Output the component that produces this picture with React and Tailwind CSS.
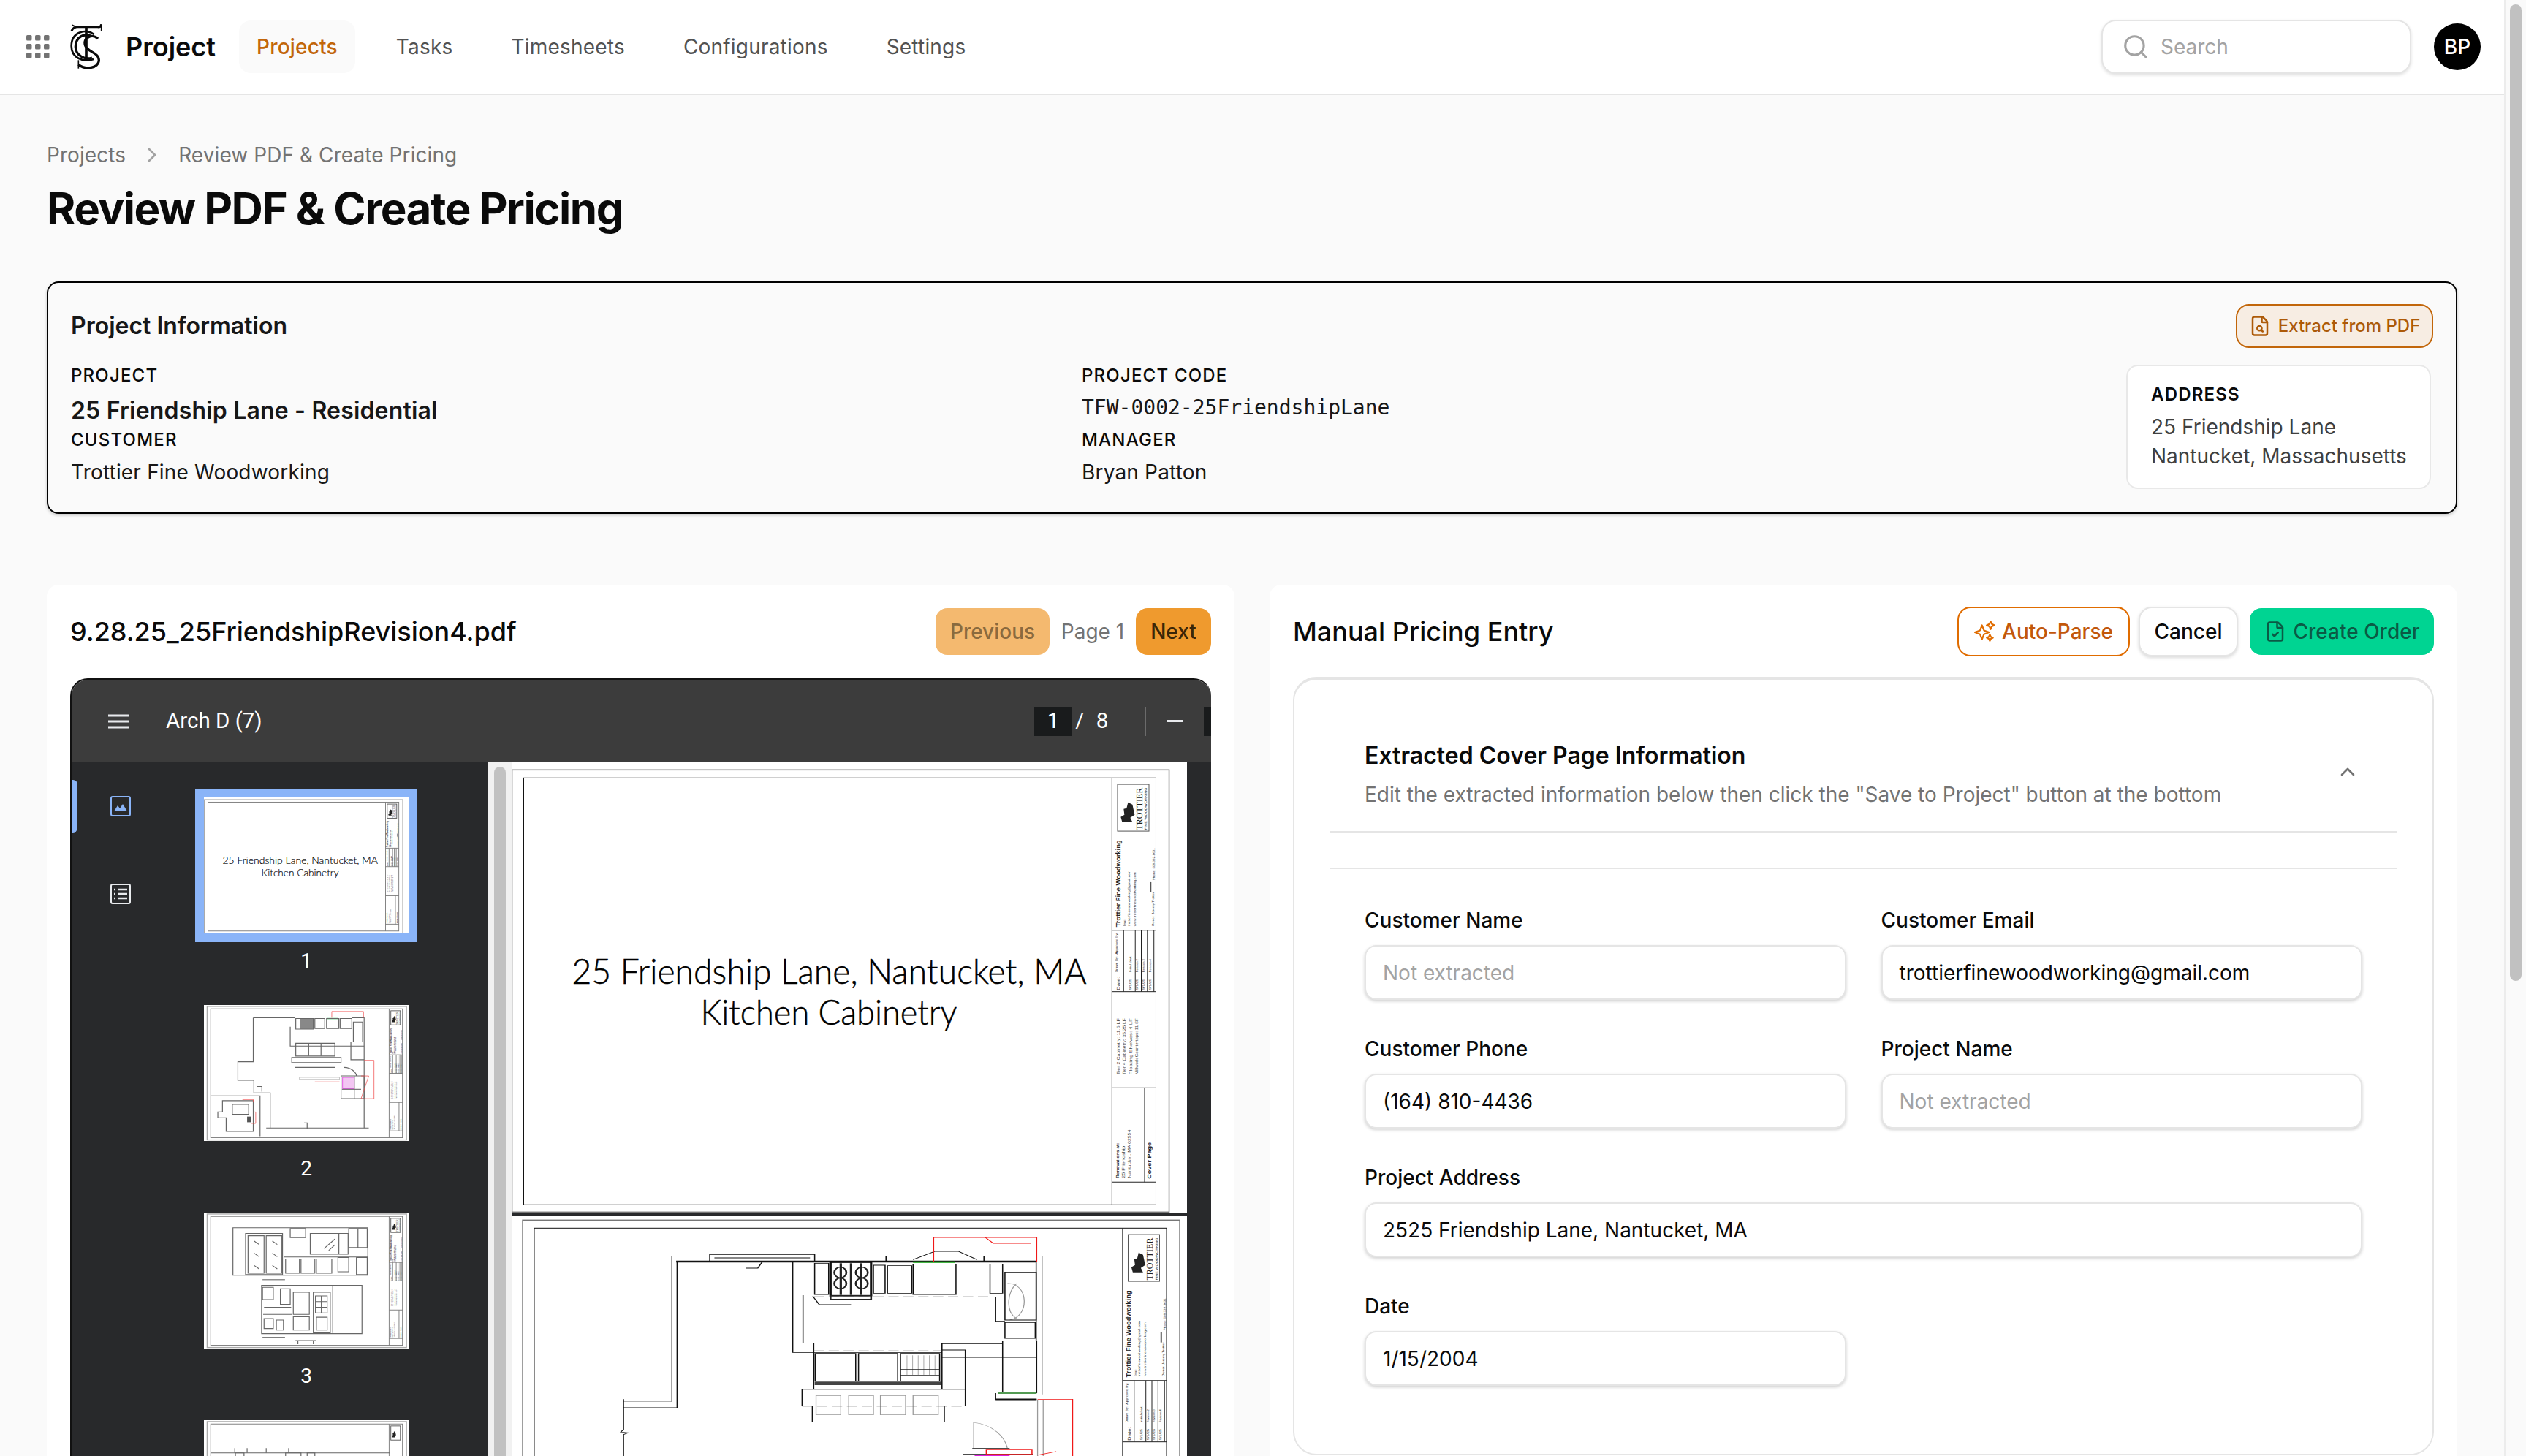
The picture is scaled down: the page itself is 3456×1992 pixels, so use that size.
import { ChevronRight, ChevronUp, FileCheck, FileSearch, Search } from 'lucide-react'

const INTER = 'font-["Inter",sans-serif]'

const X = z => z / 1.568 - 21
const Y = z => z / 1.823 - 242

function Vert({ x, y, children, size = 5.8, bold, fill = '#222', len, font = 'Liberation Sans' }) {
  return (
    <text
      transform={`translate(${X(x)} ${Y(y)}) rotate(-90)`}
      fontSize={size}
      fontWeight={bold ? 700 : 400}
      fill={fill}
      fontFamily={font}
      textLength={len}
      lengthAdjust="spacingAndGlyphs"
    >
      {children}
    </text>
  )
}

function Line({ x1, y1, x2, y2, c = '#222', w = 1 }) {
  return <line x1={X(x1)} y1={Y(y1)} x2={X(x2)} y2={Y(y2)} stroke={c} strokeWidth={w} />
}

// sheet border and title block, same on every drawing page
// labels: 'all', 'top' (page cut off below the date table) or 'none'
// weight: thumbnails need thicker lines to read as grey at that scale
function SheetFrame({ labels = 'all', weight = 1 }) {
  const lineColor = weight > 1 ? '#777' : '#222'
  return (
    <g>
      <rect x={X(33)} y={Y(460)} width={899} height={605} fill="none" stroke={weight > 1 ? '#aaa' : '#777'} strokeWidth={1.5 * weight} />
      <rect x={X(58)} y={Y(480)} width={865} height={584} fill="none" stroke={weight > 1 ? '#777' : '#111'} strokeWidth={weight} />
      <Line x1={1320} y1={480} x2={1320} y2={1545} c={lineColor} w={weight} />
      <rect x={X(1332)} y={Y(496)} width={43} height={64} fill="none" stroke="#555" strokeWidth={weight} />
      <path d={`M${X(1342)} ${Y(590)} h14 l-3 -6 l6 -4 l-3 -14 l-6 -3 l-2 8 l-4 1 l1 8 l-5 3 z`} fill="#222" />
      {[860, 1013, 1253, 1488].map(y => <Line key={y} x1={1320} y1={y} x2={1415} y2={y} c={lineColor} w={weight} />)}
      {[1345, 1370, 1383, 1396, 1410].map(x => <Line key={x} x1={x} y1={860} x2={x} y2={1013} c={lineColor} w={weight} />)}
      <Line x1={1390} y1={1253} x2={1390} y2={1488} c={lineColor} w={weight} />
      <Line x1={1403} y1={740} x2={1403} y2={765} c="#555" w={2} />
      {labels !== 'none' && (
        <g>
          <Vert x={1385} y={610} size={13} font="Liberation Serif" len={58}>TROTTIER</Vert>
          <Vert x={1395} y={610} size={4} len={58}>FINE WOODWORKING</Vert>
          <Vert x={1338} y={852} size={9.5} bold len={119}>Trottier Fine Woodworking</Vert>
          <Vert x={1350} y={850} size={3.5}>Email:</Vert>
          <Vert x={1358} y={850} size={3.6} len={76}>trottierfinewoodworking@gmail.com</Vert>
          <Vert x={1371} y={850} size={3.6} len={74}>www.trottierfinewoodworking.com</Vert>
          <Vert x={1410} y={850} size={3.5} len={47}>Owner: Jeremy Trottier</Vert>
          <Vert x={1412} y={735} size={3.6} len={44}>Phone: 508-332-8631</Vert>
          <Vert x={1337} y={1010} size={6} len={19}>Date:</Vert>
          <Vert x={1332} y={965} size={3.6} len={22}>Drawn By:</Vert>
          <Vert x={1332} y={920} size={3.6} len={30}>Approved By:</Vert>
          {['Initial draft', 'Revision 2', 'Revision 3', 'Revision 4'].map((t, i) => (
            <g key={t}>
              <Vert x={1362 + i * 14} y={965} size={3.6} len={i ? 18 : 22}>{t}</Vert>
              <Vert x={1362 + i * 14} y={1008} size={3.6} len={15}>9/1/25</Vert>
            </g>
          ))}
        </g>
      )}
      {labels === 'all' && (
        <g>
          <Vert x={1337} y={1220} size={5.6} len={77} fill="#444">Tier 2 Cabinetry: 11.5 LF</Vert>
          <Vert x={1350} y={1220} size={5.6} len={77} fill="#444">Tier 4 Cabinetry: 35.25 LF</Vert>
          <Vert x={1363} y={1220} size={5.6} len={77} fill="#444">Floating Shelves: 4 LF</Vert>
          <Vert x={1376} y={1220} size={5.6} len={77} fill="#444">Millwork Countertops: 11 SF</Vert>
          <Vert x={1335} y={1478} size={4.6} bold len={48}>Renovations at:</Vert>
          <Vert x={1347} y={1478} size={4.6} len={44} fill="#444">25 Friendship</Vert>
          <Vert x={1360} y={1478} size={4.6} len={66} fill="#444">Nantucket, MA 02554</Vert>
          <Vert x={1404} y={1480} size={8} bold len={50}>Cover Page</Vert>
        </g>
      )}
    </g>
  )
}

function CoverSheet({ weight }) {
  return (
    <svg viewBox="0 0 923 616" className="block w-full h-full bg-white">
      <SheetFrame weight={weight} />
      <g fontFamily='"Lato", sans-serif' fontWeight="300" fontSize="48" fill="#000" stroke="#000" strokeWidth="0.5">
        <text x={82} y={303} textLength={704} lengthAdjust="spacingAndGlyphs">25 Friendship Lane, Nantucket, MA</text>
        <text x={258} y={359} textLength={351} lengthAdjust="spacingAndGlyphs">Kitchen Cabinetry</text>
      </g>
    </svg>
  )
}

const planBlack = [
  'M387 255H1157', 'M272 855H387V255', 'M272 820V945L266 955L282 958L272 965V1056',
  'M457 226H682V256H457Z', 'M467 240H672', 'M1070 795V822H1158', 'M1157 255V580',
  'M682 262H712V390H682Z', 'M808 270H833V385H808Z', 'M838 272H890V385H838Z', 'M893 265H985V390H893Z',
  'M1058 265H1085V385H1058Z', 'M1090 298H1157V495H1090Z', 'M1090 505H1155V570H1090Z',
  'M835 255V233H1045V255', 'M893 247L940 213H990L1030 247', 'M635 255V628H955', 'M657 393V590',
  'M680 590H955V780', 'M680 590V778H955', 'M683 632H770V745H683Z', 'M776 632H860V745H776Z', 'M866 632H950V745H866Z',
  'M655 780H1005V618H955', 'M655 780V848H1005V780', 'M677 848V913H960V848', 'M955 592H1085', 'M955 648H1158',
  'M1085 580H1158V795', 'M1085 580V790', 'M1000 1045H1150', 'M1020 1022H1100', 'M678 397L692 432H760',
  'M570 255L560 282H535', 'M1070 400V500H1090',
]
const planRed = [
  'M937 255V156H1158V255', 'M1048 156L1065 180H1145', 'M1160 820H1235V1056', 'M1160 1050L1200 1035',
  'M1050 1028H1148V1045H1050Z',
]
const planGray = [
  'M375 233H1170V800', 'M375 233V830H272', 'M685 805H738V884H685Z', 'M755 805H808V884H755Z', 'M823 805H877V884H823Z',
  'M893 805H947V884H893Z', 'M1160 822V1056', 'M1172 822V1056', 'M1023 915V1020', 'M1023 915C1065 925 1090 975 1095 1020',
  'M1095 345C1140 340 1145 480 1100 495', 'M1115 345C1095 380 1090 460 1115 490',
]

function PlanSheet() {
  return (
    <svg viewBox="0 0 923 616" className="block w-full h-[616px] shrink-0 bg-white">
      <g transform="translate(14.5 -4)"><SheetFrame labels="top" /></g>
      <g transform="translate(-21 -22) scale(.638 .3333)" fill="none">
        {planGray.map(d => <path key={d} d={d} stroke="#999" strokeWidth="2" />)}
        {planBlack.map(d => <path key={d} d={d} stroke="#111" strokeWidth="2.4" />)}
        <path d="M385 255H1157" stroke="#111" strokeWidth="8" />
        <path d="M1070 822H1158" stroke="#111" strokeWidth="9" />
        <path d="M893 257H983" stroke="#1db31d" strokeWidth="6" />
        <path d="M1075 795H1158" stroke="#1a7a1a" strokeWidth="5" />
        <path d="M1025 1054H1100" stroke="#e020e0" strokeWidth="8" />
        {planRed.map(d => <path key={d} d={d} stroke="#f01818" strokeWidth="2.4" />)}
        <path d="M680 622H955M680 400H1060M655 848H1005" stroke="#666" strokeWidth="3" strokeDasharray="22 10" />
        <rect x="716" y="258" width="87" height="137" stroke="#111" strokeWidth="5" />
        {[738, 760, 782].map(x => <path key={x} d={`M${x} 262V392`} stroke="#222" strokeWidth="5" />)}
        {[300, 345].map(y => (
          <g key={y}>
            <ellipse cx="737" cy={y} rx="13" ry="22" stroke="#222" strokeWidth="4" />
            <ellipse cx="783" cy={y} rx="13" ry="22" stroke="#222" strokeWidth="4" />
          </g>
        ))}
        <rect x="716" y="395" width="87" height="15" stroke="#222" strokeWidth="4" />
        {[880, 892, 904, 916, 928, 940].map(x => <path key={x} d={`M${x} 640V720`} stroke="#888" strokeWidth="1.5" />)}
        <path d="M866 697H950M866 722H950" stroke="#222" strokeWidth="2" />
        <path d="M682 755H953" stroke="#444" strokeWidth="14" />
      </g>
    </svg>
  )
}

const THUMB_PLAN = 'translate(-722 19) scale(1.389 1.287)'
const THUMB_ELEV = 'translate(-722 -916) scale(1.389 1.287)'
const THUMB_NEXT = 'translate(-722 -1853) scale(1.389 1.287)'

function Thumb({ transform, dark = [], red = [], fills, labels }) {
  return (
    <svg viewBox="0 0 923 616" preserveAspectRatio="none" className="block w-full h-full bg-white">
      <g transform="translate(14.5 -4)"><SheetFrame labels={labels} weight={3} /></g>
      <g transform={transform} fill="none">
        {fills}
        {dark.map(d => <path key={d} d={d} stroke="#666" strokeWidth="2.8" />)}
        {red.map(d => <path key={d} d={d} stroke="#f04a4a" strokeWidth="1.8" />)}
      </g>
    </svg>
  )
}

const thumb2 = {
  transform: THUMB_PLAN,
  dark: [
    'M680 30H815M1000 30H1040V418', 'M680 30V185H630V250H682V295H735V418', 'M722 418H1055', 'M818 33H875V70H818Z',
    'M880 33H912V68H880Z', 'M918 33H958V68H918Z', 'M962 33H1000V68H962Z', 'M1005 45H1035V115H1005Z', 'M800 62V130H1040',
    'M818 120H945V165H818Z', 'M860 120V165M900 120V165', 'M805 170H965V188H805Z', 'M815 205H945', 'M997 115V178H1040',
    'M965 235H1040V315H965Z', 'M1008 235V315', 'M968 282H1030', 'M543 305H702V447', 'M580 322H680V430H592V382H565V362H580Z',
    'M612 335H665V370H612Z', 'M845 400H855V422', 'M692 272H708V290', 'M975 205C1000 205 1015 225 1015 235',
  ],
  red: ['M935 30V8H1038V30', 'M1040 180H1072V315H1030', 'M880 256H960', 'M1030 315L1055 235H1030', 'M645 318H680V325', 'M680 362H688V402H672'],
  fills: (
    <>
      <rect x="833" y="33" width="42" height="37" fill="#888" />
      <rect x="970" y="240" width="38" height="40" fill="#f3c6f3" stroke="#e040e0" strokeWidth="2" />
      <rect x="918" y="31" width="38" height="4" fill="#3fc76a" />
      <rect x="830" y="240" width="130" height="7" fill="none" stroke="#bbb" strokeWidth="2" />
      <rect x="660" y="378" width="14" height="20" fill="#555" />
    </>
  ),
}

const thumb3 = {
  transform: THUMB_ELEV,
  dark: [
    'M614 765H1052V932H614Z', 'M655 785H775V930H655Z', 'M663 793H715V925H663Z', 'M722 793H773V925H722Z',
    'M800 768H850V800H800Z', 'M865 785H988V858H865Z', 'M958 785V858', 'M990 768H1050V835H990Z', 'M1020 768V835',
    'M780 868H1052', 'M785 875H830V925H785Z', 'M835 875H880V925H835Z', 'M885 875H935V925H885Z', 'M955 870H990V920H955Z',
    'M1015 870H1050V930H1015Z', 'M707 968H1033V1138H707Z', 'M710 975H745V1018H710Z', 'M768 980H800V1035H768Z',
    'M810 992H862V1070H810Z', 'M875 992H930V1135H875Z', 'M882 1005H920V1065H882Z', 'M901 1005V1065M882 1025H920M882 1045H920',
    'M885 1080H920V1125H885Z', 'M810 1078H862V1125H810Z', 'M715 1085H745V1120H715Z', 'M755 1090H778V1125H755Z', 'M938 970V1136',
    'M712 1070H805', 'M715 1045H803', 'M710 948H783', 'M710 1151H783', 'M817 1162H885M825 1162V1175M875 1162V1175',
    'M683 812L699 824M683 855L699 867M683 898L699 910M742 812L758 824M742 855L758 867M742 898L758 910',
    'M910 838L945 805M925 845L945 825',
  ],
}

const thumb4 = {
  transform: THUMB_NEXT,
  labels: 'none',
  dark: ['M543 1555H1123', 'M620 1538V1555M660 1538V1555M722 1538V1555M795 1538V1555', 'M622 1555H650V1568H622Z', 'M785 1555H835V1568H785Z', 'M855 1555H880V1568H855Z'],
}

function ThumbItem({ n, active, children }) {
  return (
    <div className="flex flex-col items-center">
      <div className={`w-[304px] h-[210px] p-[12px] ${active ? 'bg-[#8ab4f8]' : ''}`}>{children}</div>
      {n && <div className="h-[52px] mb-[22px] flex items-center justify-center text-[28px] text-white">{n}</div>}
    </div>
  )
}

function PdfViewer() {
  return (
    <div className='h-[1100px] flex flex-col rounded-t-[24px] overflow-hidden border-t-2 border-l-2 border-[#111] font-["Roboto",sans-serif]'>
      <div className="h-[113px] shrink-0 bg-[#3c3c3c] flex items-center text-white text-[29.5px]">
        <svg width="28" height="20" viewBox="0 0 28 20" className="ml-[50px]">
          <path d="M0 2H28M0 10H28M0 18H28" stroke="#e8eaed" strokeWidth="3" />
        </svg>
        <span className="ml-[51px] flex-1">Arch D (7)</span>
        <div className="w-[52px] h-[40px] bg-[#191b1c] flex items-center justify-center">1</div>
        <span className="ml-[2px] w-[16px] text-center">/</span>
        <span className="ml-[11px] w-[24px] text-center">8</span>
        <div className="ml-[46px] w-[2px] h-[40px] bg-[#6b6b6b]" />
        <svg width="22" height="4" className="ml-[28px]"><rect width="22" height="3" y="0" fill="#e8eaed" /></svg>
        <div className="ml-[29px] w-[10px] h-[40px] bg-[#191b1c]" />
      </div>
      <div className="flex-1 flex min-h-0">
        <div className="w-[138px] h-full shrink-0 bg-[#28292b] pt-[24px] flex flex-col gap-[48px]">
          <div className="relative h-[72px] flex items-center justify-center">
            <div className="absolute left-0 top-0 w-[8px] h-full rounded-r-[6px] bg-[#8ab4f8]" />
            <svg width="28" height="28" viewBox="0 0 28 28" fill="none" className="ml-[-4px]">
              <rect x="1" y="1" width="26" height="26" rx="2" stroke="#8ab4f8" strokeWidth="2" />
              <path d="M5 21L10 13L13 17L17 11L23 21Z" fill="#8ab4f8" />
            </svg>
          </div>
          <div className="h-[72px] flex items-center justify-center">
            <svg width="28" height="28" viewBox="0 0 28 28" fill="none" className="ml-[-4px]">
              <rect x="1" y="1" width="26" height="26" rx="2" stroke="#e8eaed" strokeWidth="2" />
              <path d="M11 8H23M11 14H23M11 20H23" stroke="#e8eaed" strokeWidth="2.5" />
              <path d="M5 8H7M5 14H7M5 20H7" stroke="#e8eaed" strokeWidth="2.5" />
            </svg>
          </div>
        </div>
        <div className="w-[432px] shrink-0 bg-[#28292b] pt-[36px] pr-[66px]">
          <ThumbItem n="1" active><CoverSheet weight={3} /></ThumbItem>
          <ThumbItem n="2"><Thumb {...thumb2} /></ThumbItem>
          <ThumbItem n="3"><Thumb {...thumb3} /></ThumbItem>
          <ThumbItem><Thumb {...thumb4} /></ThumbItem>
        </div>
        <div className="w-[32px] shrink-0 bg-[#f1f1f1] pt-[6px] flex justify-center">
          <div className="w-[16px] h-[1000px] rounded-full bg-[#c1c1c1]" />
        </div>
        <div className="w-[924px] shrink-0 bg-[#28292b] flex flex-col gap-[4px]">
          <div className="h-[616px] shrink-0"><CoverSheet /></div>
          <PlanSheet />
        </div>
        <div className="flex-1 bg-[#28292b]" />
      </div>
    </div>
  )
}

function Field({ label, value, className = '' }) {
  return (
    <div className={className}>
      <div className="h-[36px] flex items-center text-[28px] font-medium text-[#0a0a0a]">{label}</div>
      <div className={`mt-[16px] h-[75px] px-[23px] flex items-center rounded-[16px] bg-white border-2 border-[#e5e5e5] shadow-[0_2px_4px_rgba(0,0,0,0.18)] text-[28px] ${value ? 'text-[#0a0a0a]' : 'text-[#a3a3a3]'}`}>
        {value || 'Not extracted'}
      </div>
    </div>
  )
}

function Logo() {
  return (
    <svg width="44" height="64" viewBox="0 0 132 190" fill="none" stroke="#0a0a0a">
      <path d="M6 30C10 18 18 13 32 13H104C118 13 124 18 128 3" strokeWidth="9" />
      <path d="M8 6C18 12 22 13 32 13" strokeWidth="6" />
      <path d="M128 3V32" strokeWidth="5" />
      <path d="M66 14V150" strokeWidth="11" />
      <path d="M98 44C70 20 5 30 5 92C5 140 52 160 96 146" strokeWidth="8" />
      <path d="M88 52C60 38 22 52 22 95C22 130 60 150 90 140" strokeWidth="10" />
      <path d="M114 62C92 38 50 58 62 90C72 118 118 118 118 150C118 182 62 192 34 168" strokeWidth="10" />
      <path d="M34 150V184" strokeWidth="5" />
    </svg>
  )
}

function SparkIcon() {
  return (
    <svg width="30" height="30" viewBox="0 0 28 28" fill="none" stroke="#e06c00" strokeWidth="2" strokeLinejoin="round">
      <path d="M10 6L12.5 12.5L19 15L12.5 17.5L10 24L7.5 17.5L1 15L7.5 12.5Z" />
      <path d="M21 1L22.5 4.5L26 6L22.5 7.5L21 11L19.5 7.5L16 6L19.5 4.5Z" />
      <path d="M20 18L21.3 20.7L24 22L21.3 23.3L20 26L18.7 23.3L16 22L18.7 20.7Z" />
    </svg>
  )
}

function Info({ label, children, mono, strong }) {
  return (
    <div>
      <div className="h-[36px] flex items-center text-[24px] font-medium tracking-[1.2px] text-[#0a0a0a]">{label}</div>
      <div className={`${strong ? 'mt-[8px] h-[44px] text-[32px] font-semibold tracking-[0.14px]' : 'mt-[7px] h-[38px] text-[28px]'} ${mono ? '' : 'tracking-[0.18px]'} flex items-center text-[#171717] ${mono ? 'font-["DejaVu_Sans_Mono",monospace]' : ''}`}>
        {children}
      </div>
    </div>
  )
}

export default function App() {
  return (
    <div className={`h-[1992px] w-[3456px] overflow-hidden flex bg-[#fafafa] ${INTER}`}>
      <div className="w-[3428px] shrink-0 border-r-2 border-[#ececec]">
        <header className="h-[130px] bg-white border-b-2 border-[#e5e5e5] flex items-center pl-[36px] pr-[32px]">
          <svg width="32" height="32" viewBox="0 0 32 32" fill="#737373" className="shrink-0">
            {[0, 12, 24].map(y => [0, 12, 24].map(x => <rect key={`${x}-${y}`} x={x} y={y} width="7.5" height="7.5" rx="1.5" />))}
          </svg>
          <div className="ml-[28px] shrink-0"><Logo /></div>
          <span className="ml-[32px] text-[36px] font-semibold text-[#0a0a0a]">Project</span>
          <nav className="ml-[32px] flex items-center gap-[32px] text-[28px] tracking-[0.2px] text-[#525252]">
            <a className="h-[72px] px-[24px] flex items-center rounded-[16px] bg-[#fafafa] font-medium text-[#c2660a]">Projects</a>
            <a className="h-[72px] px-[24px] flex items-center">Tasks</a>
            <a className="h-[72px] px-[24px] flex items-center">Timesheets</a>
            <a className="h-[72px] px-[24px] flex items-center">Configurations</a>
            <a className="h-[72px] px-[24px] flex items-center">Settings</a>
          </nav>
          <div className="ml-auto w-[424px] h-[74px] flex items-center pl-[26px] rounded-[20px] bg-white border-2 border-[#e5e5e5] shadow-[0_2px_4px_rgba(0,0,0,0.12)]">
            <Search size={38} strokeWidth={2} className="text-[#a3a3a3]" />
            <span className="ml-[15px] text-[28px] text-[#a3a3a3]">Search</span>
          </div>
          <div className="ml-[31px] w-[64px] h-[64px] rounded-full bg-black text-white flex items-center justify-center text-[28px] font-medium">BP</div>
        </header>

        <main className="px-[64px] pt-[64px]">
          <div className="h-[36px] flex items-center text-[28px] tracking-[0.08px] text-[#737373]">
            <span>Projects</span>
            <ChevronRight size={32} strokeWidth={2} className="mx-[20px] text-[#a3a3a3]" />
            <span>Review PDF &amp; Create Pricing</span>
          </div>
          <h1 className="mt-[19px] h-[72px] flex items-center text-[60px] font-bold tracking-[-1.5px] text-[#0a0a0a]">Review PDF &amp; Create Pricing</h1>

          <section className="mt-[64px] h-[318px] rounded-[16px] border-2 border-black bg-[#fafafa] shadow-[0_2px_4px_rgba(0,0,0,0.2)] px-[31px] pt-[29px]">
            <div className="flex items-center justify-between h-[60px]">
              <h2 className="text-[32px] font-semibold text-[#171717]">Project Information</h2>
              <button className="h-[60px] w-[270px] flex items-center justify-center gap-[10px] rounded-[18px] border-2 border-[#c2660a] bg-[#f7ede3] text-[24px] font-medium text-[#ad5a08]">
                <FileSearch size={30} strokeWidth={2} />
                Extract from PDF
              </button>
            </div>
            <div className="flex mt-[20px] items-start">
              <div className="w-[1383px] shrink-0 flex flex-col">
                <Info label="PROJECT" strong>25 Friendship Lane - Residential</Info>
                <Info label="CUSTOMER">Trottier Fine Woodworking</Info>
              </div>
              <div className="flex-1 flex flex-col">
                <Info label="PROJECT CODE" strong={false} mono>TFW-0002-25FriendshipLane</Info>
                <div className="h-[7px]" />
                <Info label="MANAGER">Bryan Patton</Info>
              </div>
              <div className="w-[417px] h-[170px] mt-[3px] mr-[3px] shrink-0 rounded-[16px] bg-white border-2 border-[#e8e8e8] pl-[32px] pt-[21px]">
                <div className="h-[36px] flex items-center text-[24px] font-semibold tracking-[1.2px] text-[#0a0a0a]">ADDRESS</div>
                <div className="mt-[6px] text-[28px] leading-[40px] text-[#404040]">25 Friendship Lane<br />Nantucket, Massachusetts</div>
              </div>
            </div>
          </section>

          <div className="mt-[97px] grid grid-cols-2 gap-[48px]">
            <section className="h-[1200px] bg-white rounded-t-[16px] px-[32px] pt-[32px]">
              <div className="h-[64px] mb-[32px] flex items-center">
                <h2 className="flex-1 text-[36px] font-medium text-[#0a0a0a]">9.28.25_25FriendshipRevision4.pdf</h2>
                <button className="h-[64px] w-[156px] rounded-[16px] bg-[#f4b96f] text-[28px] font-medium text-[#8a6a3e]">Previous</button>
                <span className="w-[118px] text-center text-[28px] text-[#737373]">Page 1</span>
                <button className="h-[64px] w-[103px] rounded-[16px] bg-[#ef9a2e] text-[28px] font-medium text-[#3a2608]">Next</button>
              </div>
              <PdfViewer />
            </section>

            <section className="h-[1200px] bg-white rounded-t-[16px] px-[32px] pt-[30px]">
              <div className="h-[68px] mb-[28px] flex items-center">
                <h2 className="flex-1 text-[36px] font-medium text-[#0a0a0a]">Manual Pricing Entry</h2>
                <button className="h-[68px] w-[236px] flex items-center justify-center gap-[8px] rounded-[18px] bg-white border-2 border-[#e06c00] text-[28px] font-medium text-[#c2570a]">
                  <SparkIcon />
                  Auto-Parse
                </button>
                <button className="ml-[12px] h-[68px] w-[136px] rounded-[18px] bg-white border-2 border-[#e5e5e5] shadow-[0_2px_4px_rgba(0,0,0,0.15)] text-[28px] font-medium text-[#0a0a0a]">Cancel</button>
                <button className="ml-[16px] h-[64px] w-[252px] flex items-center justify-center gap-[10px] rounded-[16px] bg-[#00d492] text-[28px] font-medium text-[#0b5a45]">
                  <FileCheck size={30} strokeWidth={2} />
                  Create Order
                </button>
              </div>
              <div className="h-[1065px] rounded-[32px] border-2 border-t-4 border-[#e5e5e5] px-[48px]">
                <div className="relative px-[48px] pt-[82px] pb-[30px] border-b-2 border-[#e5e5e5]">
                  <h3 className="h-[44px] flex items-center text-[32px] font-semibold text-[#0a0a0a]">Extracted Cover Page Information</h3>
                  <p className="mt-[11px] h-[40px] flex items-center text-[28px] text-[#737373]">Edit the extracted information below then click the "Save to Project" button at the bottom</p>
                  <ChevronUp size={32} strokeWidth={2} className="absolute right-[52px] top-[110px] text-[#737373]" />
                </div>
                <div className="h-[50px] border-b-2 border-[#e5e5e5]" />
                <div className="px-[48px] pt-[52px] grid grid-cols-2 gap-x-[48px] gap-y-[49px]">
                  <Field label="Customer Name" />
                  <Field label="Customer Email" value="trottierfinewoodworking@gmail.com" />
                  <Field label="Customer Phone" value="(164) 810-4436" />
                  <Field label="Project Name" />
                  <Field label="Project Address" value="2525 Friendship Lane, Nantucket, MA" className="col-span-2" />
                  <Field label="Date" value="1/15/2004" />
                </div>
              </div>
            </section>
          </div>
        </main>
      </div>

      <div className="flex-1 pt-[6px] flex justify-center bg-[#fafafa]">
        <div className="w-[16px] h-[1336px] rounded-full bg-[#c1c1c1]" />
      </div>
    </div>
  )
}
